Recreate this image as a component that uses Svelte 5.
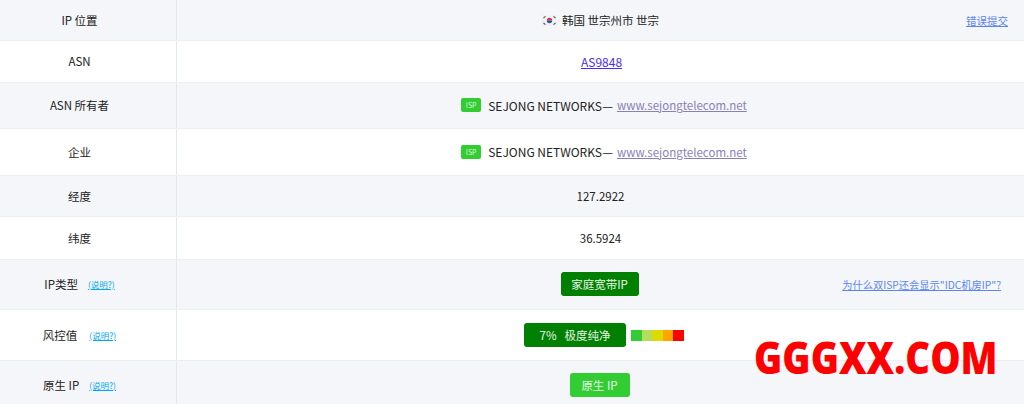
<script>
  const REGION_NOTE = '错误提交';
  const ISP = 'SEJONG NETWORKS—';
  const SITE = 'www.sejongtelecom.net';
  const RISK = ['#32cd32', '#b5dc5c', '#dcdc00', '#ffa500', '#ff0000'];
</script>

<div class="table">
  <div class="row even h41">
    <div class="label">IP 位置</div>
    <div class="value">
      <span class="center">
        <svg class="flag" viewBox="0 0 15 11" width="15" height="11">
          <rect width="15" height="11" fill="#f1f1f1" />
          <path d="M4.8 5.5a2.7 2.7 0 0 1 5.4 0z" fill="#d8344a" />
          <path d="M4.8 5.5a2.7 2.7 0 0 0 5.4 0z" fill="#2f4f9e" />
          <path d="M1.5 3l2-1.6M1.5 8l2 1.6M13.5 3l-2-1.6M13.5 8l-2 1.6" stroke="#555" stroke-width="1.1" />
        </svg>
        韩国 世宗州市 世宗
      </span>
      <a class="note first" href="#report">{REGION_NOTE}</a>
    </div>
  </div>
  <div class="row h42">
    <div class="label">ASN</div>
    <div class="value"><a class="center asn" href="#asn">AS9848</a></div>
  </div>
  <div class="row even h46">
    <div class="label">ASN 所有者</div>
    <div class="value">
      <span class="center isp-line">
        <span class="isp">ISP</span>
        <span class="org">{ISP}</span>
        <a class="site" href="#site">{SITE}</a>
      </span>
    </div>
  </div>
  <div class="row h47">
    <div class="label">企业</div>
    <div class="value">
      <span class="center isp-line">
        <span class="isp">ISP</span>
        <span class="org">{ISP}</span>
        <a class="site" href="#site">{SITE}</a>
      </span>
    </div>
  </div>
  <div class="row even h41">
    <div class="label">经度</div>
    <div class="value"><span class="center">127.2922</span></div>
  </div>
  <div class="row h43">
    <div class="label">纬度</div>
    <div class="value"><span class="center">36.5924</span></div>
  </div>
  <div class="row even h50">
    <div class="label">IP类型<a class="help" href="#help">(说明?)</a></div>
    <div class="value">
      <span class="center tag dark home">家庭宽带IP</span>
      <a class="note" href="#why">为什么双ISP还会显示"IDC机房IP"?</a>
    </div>
  </div>
  <div class="row h51">
    <div class="label">风控值<a class="help wide" href="#help">(说明?)</a></div>
    <div class="value">
      <span class="center risk">
        <span class="tag dark score"><span>7%</span><span>极度纯净</span></span>
        <span class="bar">
          {#each RISK as color}
            <i style="background: {color}"></i>
          {/each}
        </span>
      </span>
    </div>
  </div>
  <div class="row even last">
    <div class="label">原生 IP<a class="help" href="#help">(说明?)</a></div>
    <div class="value"><span class="center tag light native">原生 IP</span></div>
  </div>
  <div class="mark">GGGXX.COM</div>
</div>

<style>
  :global(body) {
    margin: 0;
    background: #fff;
    overflow: hidden;
  }

  .table {
    position: relative;
    width: 1024px;
    height: 404px;
    overflow: hidden;
    font-family: "Noto Sans CJK SC", "Noto Sans", sans-serif;
    font-size: 11.5px;
    color: #222;
  }

  .row {
    display: grid;
    grid-template-columns: 176px 1fr;
    box-sizing: border-box;
    border-bottom: 1px solid #edeef1;
  }

  .even {
    background: #f5f6fa;
  }

  .h41 { height: 41px; }
  .h42 { height: 42px; }
  .h43 { height: 43px; }
  .h46 { height: 46px; }
  .h47 { height: 47px; }
  .h50 { height: 50px; }
  .h51 { height: 51px; }
  .last { height: 50px; }

  .label {
    display: flex;
    align-items: center;
    justify-content: center;
    padding: 0 17px 1px 0;
  }

  .value {
    display: grid;
    grid-template-columns: 1fr auto 1fr;
    align-items: center;
    border-left: 1px solid #e6e7ea;
  }

  .center {
    grid-column: 2;
    display: inline-flex;
    align-items: center;
  }

  .flag {
    margin-right: 5px;
  }

  .note {
    grid-column: 3;
    justify-self: end;
    margin-right: 23px;
    font-size: 10.25px;
    color: #5b86f0;
  }

  .note.first {
    margin-right: 16px;
    font-size: 10.5px;
  }

  .asn {
    color: #4a2cf0;
    font-size: 12px;
    margin: 0 0 1px 2px;
  }

  .isp-line {
    gap: 6px;
    padding-bottom: 1px;
    margin-left: 7px;
  }

  .isp {
    box-sizing: border-box;
    width: 20px;
    height: 14px;
    border-radius: 2px;
    background: #32cd32;
    color: #dff5df;
    font-size: 7px;
    line-height: 14px;
    text-align: center;
  }

  .org {
    margin-left: 1px;
    font-size: 12px;
  }

  .site {
    margin-left: -2px;
    color: #8a80b8;
  }

  .help {
    margin-left: 10px;
    font-size: 8.5px;
    color: #00a8f5;
  }

  .help.wide {
    margin-left: 12px;
  }

  .tag {
    box-sizing: border-box;
    height: 24px;
    border-radius: 3px;
    color: #e8f6e8;
    justify-content: center;
    margin-bottom: 1px;
  }

  .dark {
    background: #008000;
  }

  .light {
    background: #32cd32;
  }

  .home {
    width: 78px;
    margin-right: 2px;
  }

  .native {
    width: 60px;
    margin-right: 2px;
  }

  .risk {
    gap: 5px;
    margin-left: 7px;
  }

  .score {
    display: inline-flex;
    align-items: center;
    width: 102px;
    gap: 8px;
  }

  .bar {
    display: flex;
  }

  .bar i {
    width: 10.6px;
    height: 11px;
  }

  /* watermark stamped over the table */
  .mark {
    position: absolute;
    left: 754px;
    top: 327px;
    font-family: "Open Sans", sans-serif;
    font-weight: 800;
    font-size: 45px;
    line-height: 60px;
    color: #ff0000;
    transform: scaleX(0.85);
    transform-origin: left center;
    white-space: nowrap;
  }
</style>
